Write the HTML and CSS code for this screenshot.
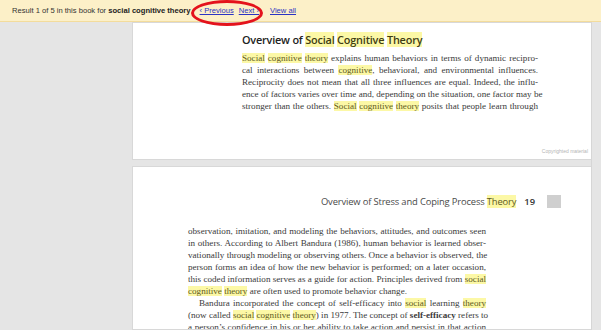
FILE: index.html
```html
<!DOCTYPE html>
<html>
<head>
<meta charset="utf-8">
<link rel="stylesheet" href="styles.css">
</head>
<body>
<div class="bar">
  <span class="result">Result 1 of 5 in this book for <b>social cognitive theory</b></span>
  <span class="nav">
    <a href="#" class="lnk">&lsaquo; Previous</a>
    <a href="#" class="lnk">Next &rsaquo;</a>
    <span class="ring"></span>
  </span>
  <a href="#" class="lnk viewall">View all</a>
</div>
<div class="main">
  <div class="side"></div>
  <div class="pages">
    <div class="page page1">
      <div class="content1">
        <h1 class="title">Overview of <span class="hl">Social</span> <span class="hl">Cognitive</span> <span class="hl">Theory</span></h1>
        <div class="text">
          <div class="ln"><span class="hl">Social</span> <span class="hl">cognitive</span> <span class="hl">theory</span> explains human behaviors in terms of dynamic recipro-</div>
          <div class="ln">cal interactions between <span class="hl">cognitive</span>, behavioral, and environmental influences.</div>
          <div class="ln">Reciprocity does not mean that all three influences are equal. Indeed, the influ-</div>
          <div class="ln">ence of factors varies over time and, depending on the situation, one factor may be</div>
          <div class="ln">stronger than the others. <span class="hl">Social</span> <span class="hl">cognitive</span> <span class="hl">theory</span> posits that people learn through</div>
        </div>
      </div>
      <div class="copy">Copyrighted material</div>
    </div>
    <div class="page page2">
      <div class="runhead">
        <span class="rh-title">Overview of Stress and Coping Process <span class="hl">Theory</span></span>
        <span class="folio">19</span>
        <span class="sq"></span>
      </div>
      <div class="text text2">
        <div class="ln">observation, imitation, and modeling the behaviors, attitudes, and outcomes seen</div>
        <div class="ln">in others. According to Albert Bandura (1986), human behavior is learned obser-</div>
        <div class="ln">vationally through modeling or observing others. Once a behavior is observed, the</div>
        <div class="ln">person forms an idea of how the new behavior is performed; on a later occasion,</div>
        <div class="ln">this coded information serves as a guide for action. Principles derived from <span class="hl">social</span></div>
        <div class="ln last"><span class="hl">cognitive</span> <span class="hl">theory</span> are often used to promote behavior change.</div>
        <div class="ln indent">Bandura incorporated the concept of self-efficacy into <span class="hl">social</span> learning <span class="hl">theory</span></div>
        <div class="ln">(now called <span class="hl">social</span> <span class="hl">cognitive</span> <span class="hl">theory</span>) in 1977. The concept of <b>self-efficacy</b> refers to</div>
        <div class="ln">a person&rsquo;s confidence in his or her ability to take action and persist in that action</div>
      </div>
    </div>
  </div>
  <div class="rside"></div>
</div>
</body>
</html>
```
FILE: styles.css
```css
html, body {
  margin: 0;
  padding: 0;
  background: #e5e5e5;
  overflow: hidden;
  height: 330px;
}
.bar {
  height: 21px;
  background: #fcf0c8;
  border-bottom: 1px solid #f3dc9c;
  display: flex;
  align-items: center;
  padding-left: 12px;
  font-family: "Liberation Sans", Arial, sans-serif;
  font-size: 7.6px;
  color: #333;
  white-space: nowrap;
}
.result b { color: #222; }
.nav {
  position: relative;
  margin-left: 9px;
  display: flex;
  gap: 5px;
}
.lnk {
  color: #2b34c4;
  text-decoration: underline;
}
.viewall { margin-left: 11px; }
.ring {
  position: absolute;
  left: -9px;
  top: -6px;
  width: 66px;
  height: 20px;
  border: 3px solid #e4131c;
  border-radius: 50%;
}
.main {
  display: flex;
  height: 308px;
}
.side {
  width: 132px;
  flex: none;
}
.pages {
  width: 459px;
  flex: none;
  display: flex;
  flex-direction: column;
  gap: 6px;
}
.rside {
  flex: 1;
  border-left: 1px solid #d6d6d6;
}
.page {
  background: #fff;
  border: 1px solid #d8d8d8;
  border-right: none;
  box-sizing: border-box;
}
.page1 {
  flex: none;
  height: 138px;
  padding-top: 9px;
  display: flex;
  flex-direction: column;
}
.content1 {
  margin-left: 109px;
  width: 296px;
}
.title {
  margin: 0;
  font-family: "Open Sans", sans-serif;
  font-weight: 600;
  font-size: 10.9px;
  line-height: 16px;
  color: #222;
  letter-spacing: -0.2px;
  white-space: nowrap;
}
.text {
  margin-top: 4px;
  font-family: "Liberation Serif", "Times New Roman", serif;
  font-size: 9.1px;
  line-height: 12px;
  color: #3a3a3a;
}
.ln {
  text-align: justify;
  text-align-last: justify;
  white-space: nowrap;
  height: 12px;
}
.ln.last { text-align-last: left; }
.ln.indent { padding-left: 11px; }
.hl {
  background: #fcf8a6;
  color: #5e5a22;
}
.title .hl { color: #3f3c14; }
.copy {
  margin-top: auto;
  align-self: flex-end;
  margin-right: 3px;
  margin-bottom: 5px;
  font-family: "Liberation Sans", Arial, sans-serif;
  font-size: 5px;
  color: #b5b5b5;
}
.page2 {
  flex: 1;
  min-height: 0;
  overflow: hidden;
  padding-top: 28px;
}
.runhead {
  display: flex;
  justify-content: flex-end;
  align-items: center;
  height: 13px;
  padding-right: 30px;
  font-family: "Open Sans", sans-serif;
  font-size: 9.4px;
  color: #4a4a4a;
  white-space: nowrap;
}
.rh-title { letter-spacing: -0.15px; }
.folio {
  margin-left: 8px;
  font-weight: 600;
  color: #333;
}
.sq {
  width: 14px;
  height: 13px;
  background: #cfcfcf;
  margin-left: 12px;
}
.text2 {
  margin-top: 17px;
  margin-left: 55px;
  width: 298px;
}
```
